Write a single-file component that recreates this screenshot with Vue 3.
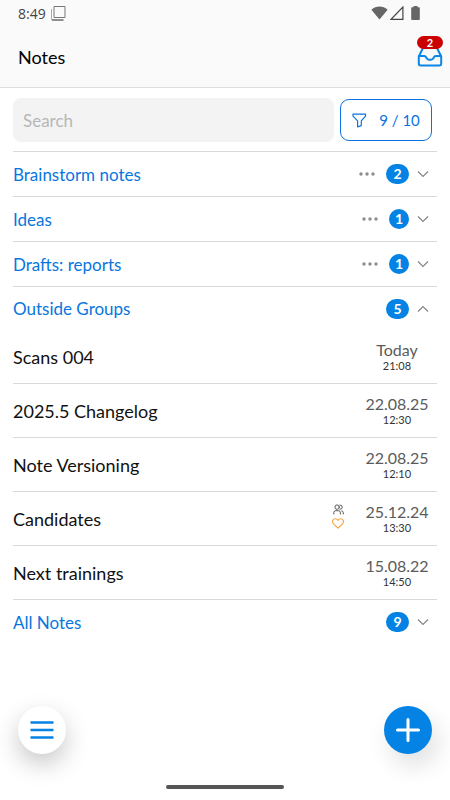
<script setup>
import { ref } from 'vue'

const query = ref('')
const groups = [
  { name: 'Brainstorm notes', count: 2, menu: true },
  { name: 'Ideas', count: 1, menu: true },
  { name: 'Drafts: reports', count: 1, menu: true },
  {
    name: 'Outside Groups',
    count: 5,
    open: true,
    notes: [
      { title: 'Scans 004', date: 'Today', time: '21:08' },
      { title: '2025.5 Changelog', date: '22.08.25', time: '12:30' },
      { title: 'Note Versioning', date: '22.08.25', time: '12:10' },
      { title: 'Candidates', date: '25.12.24', time: '13:30', marked: true },
      { title: 'Next trainings', date: '15.08.22', time: '14:50' }
    ]
  },
  { name: 'All Notes', count: 9 }
]
</script>

<template>
  <div class="screen">
    <header class="header">
      <div class="status">
        <span class="clock">8:49</span>
        <svg class="windows" width="15" height="15" viewBox="0 0 15 15" fill="none">
          <path d="M3 .5h11v11H3z" stroke="#777" />
          <path d="M.5 3v11" stroke="#aaa" />
          <path d="M1 14h11.5" stroke="#222" />
        </svg>
        <svg class="wifi" width="17" height="14" viewBox="0 0 17 14">
          <path d="M.4 3.7C5-.5 12-.5 16.6 3.7L8.5 13.6z" fill="#666" />
        </svg>
        <svg width="14" height="14" viewBox="0 0 14 14" fill="none">
          <path d="M12.9 1v12.3H1z" stroke="#444" stroke-width="1.2" />
        </svg>
        <svg class="battery" width="9" height="14" viewBox="0 0 9 14">
          <path d="M2.5 0h4v1.2H8q.8 0 .8.8v11q0 .9-.8.9H1q-.8 0-.8-.9V2q0-.8.8-.8h1.5z" fill="#666" />
        </svg>
      </div>
      <div class="title-row">
        <h1>Notes</h1>
        <button class="inbox" type="button" aria-label="Inbox">
          <svg width="26" height="20" viewBox="0 0 26 20" fill="none" stroke="#0a85e8" stroke-width="2" stroke-linejoin="round" stroke-linecap="round">
            <path d="M6 1h14l4.200 8.500v7q0 1.900-1.900 1.900H3.700q-1.900 0-1.900-1.900v-7z" />
            <path d="M2 9h5.300q1.200 0 1.800 1.200l.5 1q.7 1.500 2.300 1.500h2.200q1.600 0 2.300-1.500l.5-1q.6-1.200 1.800-1.200H24" />
          </svg>
          <span class="alert">2</span>
        </button>
      </div>
    </header>

    <main>
      <div class="tools">
        <input v-model="query" type="search" placeholder="Search" aria-label="Search" />
        <button class="filter" type="button">
          <svg width="15" height="15" viewBox="0 0 15 15" fill="none" stroke="#0a73e4" stroke-width="1.2" stroke-linejoin="round">
            <path d="M1 1.200h12.500v1.900L9.300 7.800v4.800l-3.700 1.300V7.800L1 3.100z" />
          </svg>
          <span>9 / 10</span>
        </button>
      </div>

      <section v-for="group in groups" :key="group.name" class="group">
        <div class="group-row" :class="{ open: group.open }">
          <h2>{{ group.name }}</h2>
          <button v-if="group.menu" class="plain more" type="button" :aria-label="group.name + ' options'">
            <svg width="16" height="4" viewBox="0 0 16 4" fill="#8d8d8d">
              <circle cx="2" cy="2" r="1.700" /><circle cx="8" cy="2" r="1.700" /><circle cx="14" cy="2" r="1.700" />
            </svg>
          </button>
          <span class="count" :class="{ round: group.count === 1 }">{{ group.count }}</span>
          <button class="plain" type="button" :aria-label="group.name" :aria-expanded="!!group.open">
            <svg width="12" height="8" viewBox="0 0 12 8" fill="none" stroke="#858585" stroke-width="1.200">
              <path :d="group.open ? 'M1 6.500l5-5 5 5' : 'M1 1.500l5 5 5-5'" />
            </svg>
          </button>
        </div>
        <ul v-if="group.open" class="notes">
          <li v-for="note in group.notes" :key="note.title">
            <span class="name">{{ note.title }}</span>
            <span v-if="note.marked" class="marks">
              <svg width="11" height="11" viewBox="0 0 11 11" fill="none" stroke="#555" stroke-width="1" stroke-linecap="round">
                <circle cx="4.100" cy="3.100" r="2.200" />
                <path d="M7 1q2.300.2 2.300 2.200T7 5.300M.8 10V8.700q0-2 2-2h2.600q2 0 2 2V10M8.700 6.800q1.600.3 1.600 2V10" />
              </svg>
              <svg width="12" height="11" viewBox="0 0 12 11" fill="none" stroke="#f5a33a" stroke-width="1.100" stroke-linejoin="round">
                <path d="M6 10.200L1.500 5.800C-.6 3.300 1.200.7 3.300.7 4.600.7 5.500 1.500 6 2.400 6.500 1.500 7.400.7 8.700.7c2.100 0 3.900 2.600 1.800 5.100z" />
              </svg>
            </span>
            <span class="when">
              <span class="date">{{ note.date }}</span>
              <span class="time">{{ note.time }}</span>
            </span>
          </li>
        </ul>
      </section>
    </main>

    <button class="fab menu" type="button" aria-label="Menu">
      <svg width="24" height="20" viewBox="0 0 24 20" stroke="#0483e4" stroke-width="2.400">
        <path d="M.5 2.500h23M.5 10h23M.5 17.500h23" />
      </svg>
    </button>
    <button class="fab add" type="button" aria-label="Add note">
      <svg width="24" height="24" viewBox="0 0 24 24" stroke="#fff" stroke-width="3" stroke-linecap="round">
        <path d="M12 1.500v21M1.500 12h21" />
      </svg>
    </button>
    <div class="home-bar"></div>
  </div>
</template>

<style>
body {
  margin: 0;
  background: #fff;
}
</style>

<style scoped>
.screen {
  min-height: 100vh;
  font-family: Lato, "Liberation Sans", sans-serif;
  font-size: 17px;
  color: #111;
}
button {
  font: inherit;
  padding: 0;
  border: 0;
  background: none;
  cursor: pointer;
}
svg {
  display: block;
  flex: none;
}
h1,
h2 {
  margin: 0;
  font-size: 17px;
  font-weight: 400;
}
.header {
  background: #fafafa;
  border-bottom: 1px solid #dedede;
}
.status {
  display: flex;
  align-items: center;
  height: 26px;
  padding: 0 30px 0 18px;
}
.clock {
  font-family: "Open Sans", sans-serif;
  font-size: 14px;
  font-weight: 400;
  color: #444;
}
.windows {
  margin-left: 5px;
}
.wifi {
  margin-left: auto;
  margin-right: 2px;
}
.battery {
  margin-left: 7px;
}
.title-row {
  display: flex;
  align-items: center;
  justify-content: space-between;
  height: 61px;
  padding: 0 7px 0 18px;
}
h1 {
  font-size: 18px;
  color: #000;
}
.inbox {
  position: relative;
}
.alert {
  position: absolute;
  left: 0;
  top: -11px;
  width: 26px;
  height: 13px;
  border-radius: 7px;
  background: #cb0000;
  color: #fff;
  font-size: 11px;
  font-weight: 700;
  line-height: 13px;
}
.tools {
  display: flex;
  align-items: center;
  gap: 6px;
  padding: 10px 18px 9px 13px;
}
input {
  flex: 1;
  min-width: 0;
  box-sizing: border-box;
  height: 44px;
  padding: 0 10px;
  border: 0;
  border-radius: 8px;
  background: #f3f3f3;
  font: inherit;
  outline: none;
  appearance: none;
}
input::placeholder {
  color: #b7b7b7;
  opacity: 1;
}
.filter {
  display: flex;
  align-items: center;
  justify-content: center;
  gap: 12px;
  width: 92px;
  height: 42px;
  border: 1px solid #0a73e4;
  border-radius: 9px;
  color: #0a73e4;
  font-size: 15px;
}
.group {
  margin: 0 13px;
  border-top: 1px solid #d9d9d9;
}
.group-row {
  display: flex;
  align-items: center;
  gap: 8px;
  height: 44px;
  padding-right: 8px;
}
.group-row.open {
  height: 43px;
}
h2 {
  flex: 1;
  color: #0876e0;
}
.plain {
  display: flex;
}
.more {
  margin-right: 3px;
}
.count {
  width: 23px;
  height: 20px;
  border-radius: 10px;
  background: #0483e4;
  color: #fff;
  font-size: 14px;
  font-weight: 700;
  line-height: 20px;
  text-align: center;
}
.count.round {
  width: 20px;
}
.notes {
  list-style: none;
  margin: 0;
  padding: 0;
}
li {
  display: flex;
  align-items: center;
  height: 53px;
}
li + li {
  border-top: 1px solid #d9d9d9;
}
.name {
  flex: 1;
  font-size: 18px;
}
.marks {
  display: flex;
  flex-direction: column;
  align-items: center;
  gap: 3px;
  margin-right: 13px;
  padding-bottom: 4px;
}
.when {
  display: flex;
  flex-direction: column;
  align-items: center;
  width: 80px;
}
.date {
  font-size: 16px;
  line-height: 18px;
  color: #5b5b5b;
}
.time {
  font-size: 11px;
  line-height: 14px;
  color: #333;
}
.fab {
  position: fixed;
  bottom: 46px;
  display: grid;
  place-items: center;
  width: 48px;
  height: 48px;
  border-radius: 50%;
}
.menu {
  left: 18px;
  background: #fff;
  box-shadow: 0 10px 24px rgba(0, 0, 0, 0.22);
}
.add {
  right: 18px;
  background: #0483e4;
  box-shadow: 6px 12px 24px rgba(0, 0, 0, 0.12);
}
.home-bar {
  position: fixed;
  bottom: 11px;
  left: 50%;
  width: 118px;
  height: 4px;
  margin-left: -59px;
  border-radius: 2px;
  background: #555;
}
</style>
